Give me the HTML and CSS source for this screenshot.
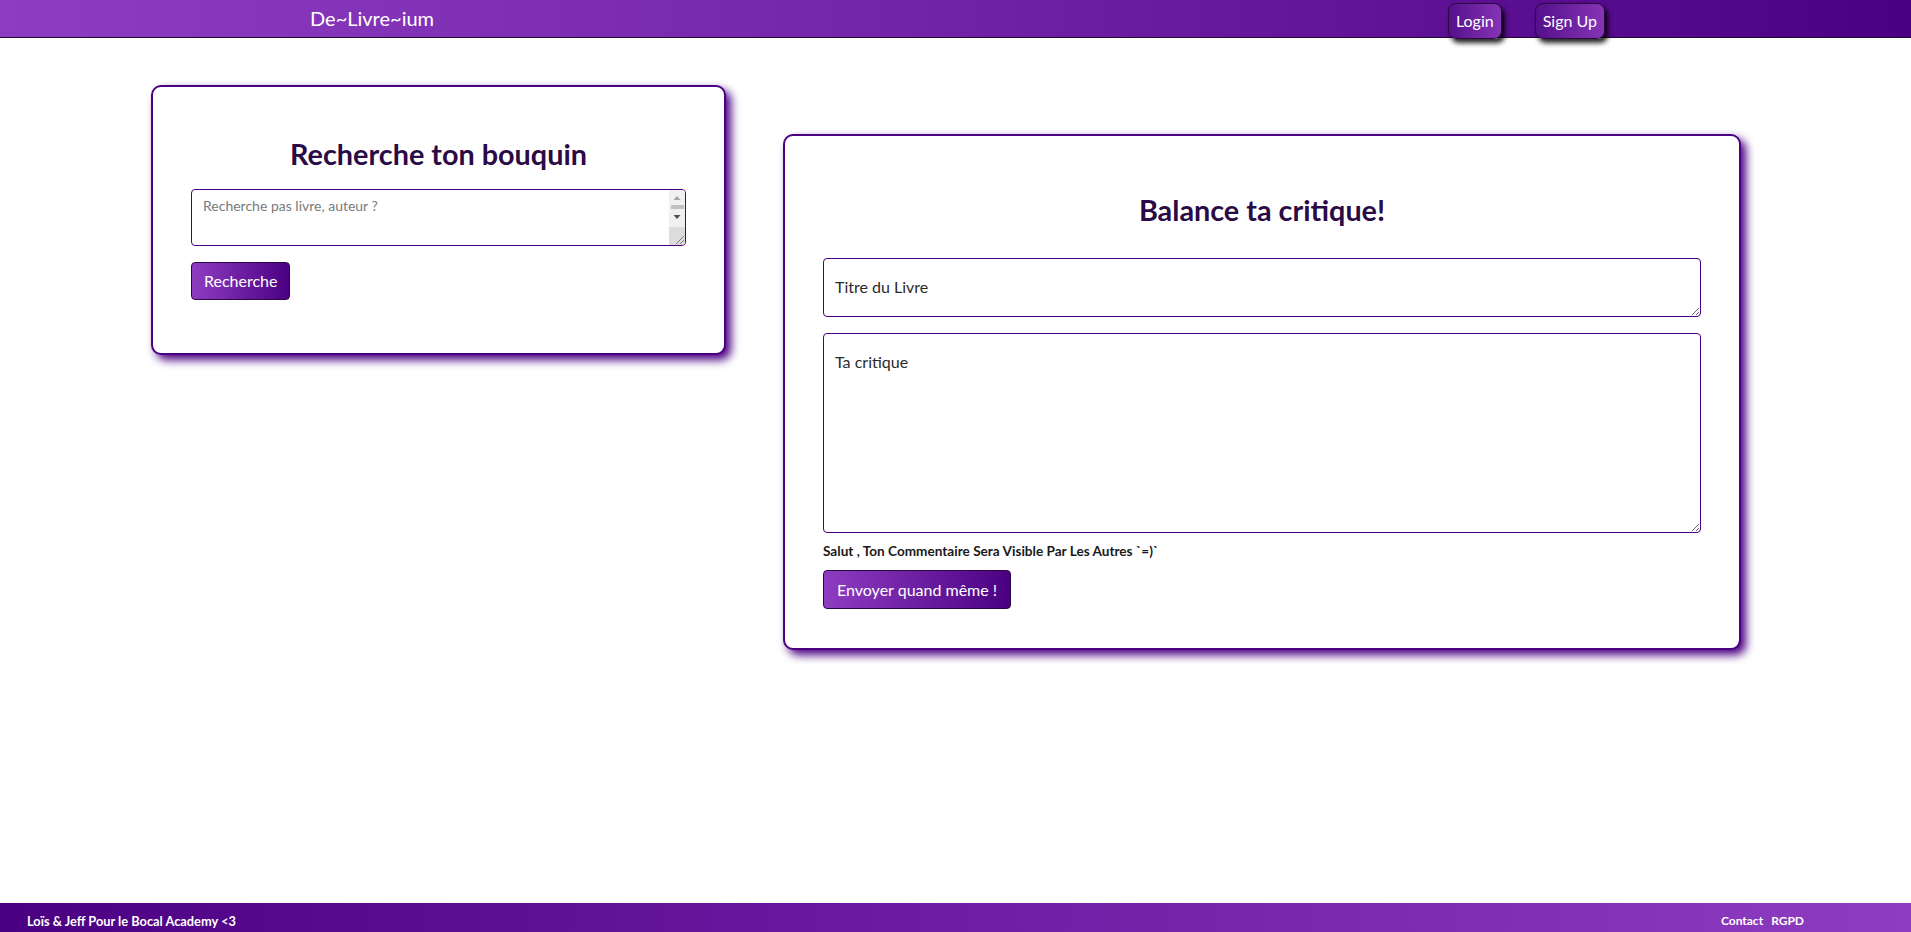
FILE: index.html
```html
<!DOCTYPE html>
<html lang="fr">
<head>
<meta charset="utf-8">
<title>De~Livre~ium</title>
<link rel="stylesheet" href="styles.css">
</head>
<body>
<header class="topbar">
  <a class="brand" href="#">De~Livre~ium</a>
  <nav class="nav">
    <button class="nav-btn" type="button">Login</button>
    <button class="nav-btn" type="button">Sign Up</button>
  </nav>
</header>

<main class="content">
  <section class="card card-search">
    <h2 class="card-title title-search">Recherche ton bouquin</h2>
    <div class="search-box">
      <textarea class="field field-search" placeholder="Recherche pas livre, auteur ?"></textarea>
      <svg class="fake-scroll" width="16" height="55" viewBox="0 0 16 55" aria-hidden="true">
        <rect x="0" y="0" width="16" height="37" fill="#f0f0f0"/>
        <polygon points="4.5,10 11.5,10 8,6" fill="#a3a3a3"/>
        <rect x="2" y="15" width="13" height="4" fill="#c1c1c1"/>
        <polygon points="4.5,25 11.5,25 8,29" fill="#505050"/>
        <rect x="0" y="37" width="16" height="18" fill="#dcdcdc"/>
        <line x1="7" y1="54" x2="15" y2="46" stroke="#6b6b6b" stroke-width="0.8"/>
        <line x1="11" y1="54" x2="15" y2="50" stroke="#6b6b6b" stroke-width="0.8"/>
      </svg>
    </div>
    <button class="btn btn-search" type="button">Recherche</button>
  </section>

  <section class="card card-review">
    <h2 class="card-title title-review">Balance ta critique!</h2>
    <textarea class="field field-title" placeholder="Titre du Livre"></textarea>
    <textarea class="field field-review" placeholder="Ta critique"></textarea>
    <p class="note">Salut , Ton Commentaire Sera Visible Par Les Autres `=)`</p>
    <button class="btn btn-send" type="button">Envoyer quand même !</button>
  </section>
</main>

<footer class="footer">
  <span class="credits">Loïs &amp; Jeff Pour le Bocal Academy &lt;3</span>
  <span class="links"><a href="#">Contact</a><a href="#">RGPD</a></span>
</footer>
</body>
</html>
```

FILE: styles.css
```css
* { box-sizing: border-box; }

html, body { height: 100%; }

body {
  margin: 0;
  font-family: Lato, "Open Sans", "Liberation Sans", sans-serif;
  color: #212529;
  background: #fff;
  display: flex;
  flex-direction: column;
  min-height: 100vh;
}

/* ---------- header ---------- */
.topbar {
  height: 38px;
  display: flex;
  align-items: flex-start;
  padding: 0 306px 0 310px;
  background: linear-gradient(to right, #8e3dc1 0%, #7426a9 45%, #4b0082 100%);
  border-bottom: 1px solid #220733;
}

.brand {
  color: #fff;
  text-decoration: none;
  font-size: 20px;
  line-height: 37px;
}

.nav {
  margin-left: auto;
  display: flex;
  gap: 33px;
  padding-top: 3px;
}

.nav-btn {
  font-family: inherit;
  font-size: 16px;
  line-height: 24px;
  padding: 5px 7px;
  color: #fff;
  border: 1px solid #2a0a40;
  border-radius: 8px;
  background: linear-gradient(to right, #55108c, #8534b6);
  box-shadow: 3px 4px 5px rgba(0, 0, 0, 0.85);
  cursor: pointer;
}

/* ---------- content ---------- */
.content {
  flex: 1;
  display: flex;
  align-items: flex-start;
  gap: 57px;
  padding: 47px 0 0 151px;
}

.card {
  background: #fff;
  border: 2px solid #4b0082;
  border-radius: 10px;
  box-shadow: 5px 5px 10px #4b0082;
  display: flex;
  flex-direction: column;
  align-items: flex-start;
  padding: 40px 38px;
}

.card-search {
  width: 575px;
  padding-bottom: 53px;
}

.card-review {
  width: 958px;
  margin-top: 49px;
  padding-bottom: 39px;
}

.card-title {
  align-self: stretch;
  text-align: center;
  font-size: 28.8px;
  line-height: 34px;
  font-weight: 700;
  color: #2a0b46;
}

.title-search { margin: 10px 0 18px; }
.title-review { margin: 17px 0 31px; }

.field {
  display: block;
  width: 100%;
  font-family: inherit;
  color: #212529;
  background: #fff;
  border: 1px solid #4b0082;
  border-radius: 4px;
  outline: none;
}

.field::placeholder { color: #2b2b2b; opacity: 1; }

.search-box {
  position: relative;
  width: 100%;
}

.field-search {
  height: 57px;
  font-size: 14px;
  line-height: 18px;
  padding: 7px 20px 7px 11px;
  resize: none;
}

.field-search::placeholder { color: #7a7a7a; }

.fake-scroll {
  position: absolute;
  top: 1px;
  right: 1px;
  pointer-events: none;
  border-radius: 0 3px 3px 0;
}

.field-title,
.field-review {
  font-size: 16px;
  line-height: 24px;
  padding: 16px 11px;
}

.field-title { height: 59px; margin-bottom: 16px; }
.field-review { height: 200px; }

.note {
  margin: 8px 0 9px;
  font-size: 13.6px;
  line-height: 20px;
  font-weight: 700;
  color: #1a1a1a;
}

.btn {
  font-family: inherit;
  font-size: 16px;
  line-height: 24px;
  padding: 6px 12px;
  color: #fff;
  border: 1px solid #2a0845;
  border-radius: 4px;
  background: linear-gradient(to right, #8e3dc1, #4b0082);
  cursor: pointer;
}

.btn-search { margin-top: 16px; }
.btn-send { padding: 6px 13px; height: 39px; }

/* ---------- footer ---------- */
.footer {
  height: 29px;
  display: flex;
  justify-content: space-between;
  align-items: flex-start;
  padding: 10px 107px 0 27px;
  background: linear-gradient(to right, #4b0082 0%, #6a1aa0 45%, #8e3dc1 100%);
  color: #fff;
  font-size: 12px;
  line-height: 16px;
  font-weight: 700;
}

.credits { font-size: 12.8px; }

.links { display: flex; gap: 8px; }
.links a { color: #fff; text-decoration: none; }
```
